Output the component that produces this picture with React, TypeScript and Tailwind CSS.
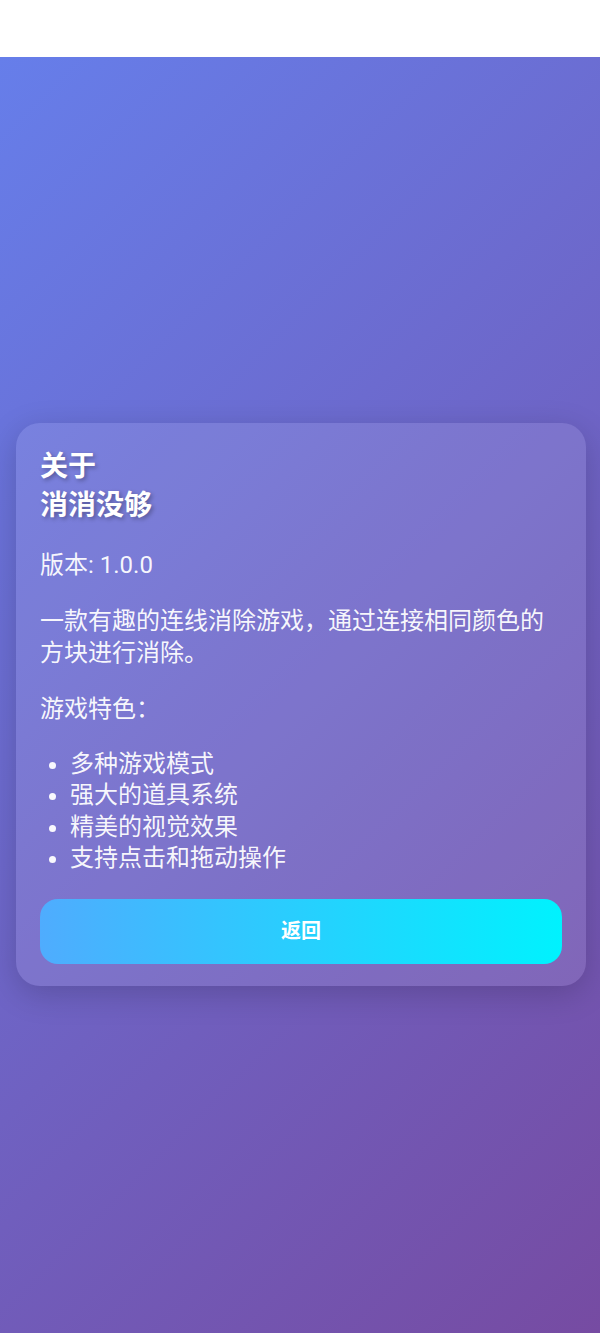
import React from "react";

export default function App() {
  const features = ["多种游戏模式", "强大的道具系统", "精美的视觉效果", "支持点击和拖动操作"];
  return (
    <div
      className="min-h-screen flex flex-col bg-white"
      style={{ fontFamily: 'Roboto, "Noto Sans CJK SC", "Noto Sans", sans-serif' }}
    >
      <div className="h-[57px] bg-white shrink-0" />
      <div className="flex-1 flex flex-col justify-center pl-4 pr-[14px] pt-[18px] bg-[linear-gradient(135deg,#667eea_0%,#764ba2_100%)]">
        <div className="rounded-[24px] bg-white/10 px-6 pt-6 pb-[22px] shadow-[0_8px_32px_rgba(0,0,0,0.18)] text-white">
          <h2 className="text-[28px] leading-[39px] font-bold [text-shadow:2px_2px_4px_rgba(0,0,0,0.3)]">
            关于
            <br />
            消消没够
          </h2>
          <p className="mt-6 text-[24px] leading-[32px] text-white/95">版本: 1.0.0</p>
          <p className="mt-6 text-[24px] leading-[32px] text-white/95">
            一款有趣的连线消除游戏，通过连接相同颜色的方块进行消除。
          </p>
          <p className="mt-6 text-[24px] leading-[32px] text-white/95">游戏特色：</p>
          <ul className="mt-6 list-disc pl-[30px] text-[24px] leading-[31.5px] text-white/95">
            {features.map((f) => (
              <li key={f}>{f}</li>
            ))}
          </ul>
          <button className="mt-6 w-full h-[65px] rounded-[18px] bg-[linear-gradient(90deg,#4facfe_0%,#00f2fe_100%)] text-white text-[20px] font-bold flex items-center justify-center">
            返回
          </button>
        </div>
      </div>
    </div>
  );
}
